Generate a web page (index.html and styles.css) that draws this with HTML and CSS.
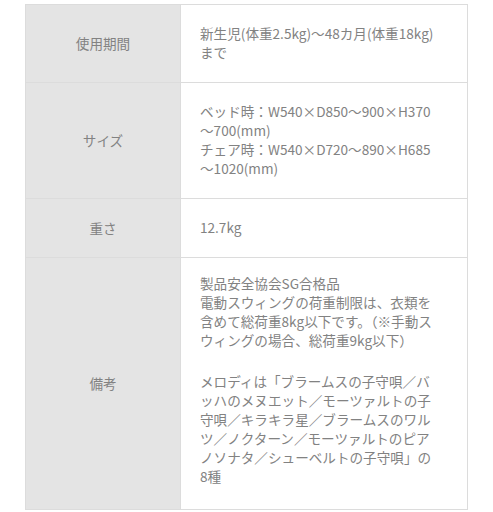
FILE: index.html
```html
<!DOCTYPE html>
<html lang="ja">
<head>
<meta charset="utf-8">
<link rel="stylesheet" href="styles.css">
</head>
<body>
<div class="wrap">
<table class="spec">
<tr>
<th>使用期間</th>
<td>新生児(体重2.5kg)〜48カ月(体重18kg)<br>まで</td>
</tr>
<tr>
<th>サイズ</th>
<td>ベッド時：W540×D850〜900×H370<br>〜700(mm)<br>チェア時：W540×D720〜890×H685<br>〜1020(mm)</td>
</tr>
<tr>
<th>重さ</th>
<td>12.7kg</td>
</tr>
<tr>
<th>備考</th>
<td class="note">製品安全協会SG合格品<br>電動スウィングの荷重制限は、衣類を<br>含めて総荷重8kg以下です。（※手動ス<br>ウィングの場合、総荷重9kg以下）<span class="gap"></span>メロディは「ブラームスの子守唄／バ<br>ッハのメヌエット／モーツァルトの子<br>守唄／キラキラ星／ブラームスのワル<br>ツ／ノクターン／モーツァルトのピア<br>ノソナタ／シューベルトの子守唄」の<br>8種</td>
</tr>
</table>
</div>
</body>
</html>
```
FILE: styles.css
```css
html, body {
  margin: 0;
  padding: 0;
  background: #ffffff;
}
.wrap {
  padding: 4px 0 0 25px;
}
.spec {
  border-collapse: collapse;
  width: 443px;
  font-family: "Noto Sans CJK JP", "Noto Sans", sans-serif;
  font-size: 13.6px;
  line-height: 19px;
  color: #828282;
  white-space: nowrap;
}
.spec th, .spec td {
  border: 1.5px solid #dcdcdc;
  vertical-align: middle;
}
.spec th {
  width: 154px;
  background: #e4e4e4;
  font-weight: normal;
  text-align: center;
  padding: 0;
}
.spec td {
  background: #ffffff;
  text-align: left;
  padding: 19px 18px 20px 19px;
}
.spec td.note {
  padding: 16px 18px 23px 19px;
}
.gap {
  display: block;
  height: 22px;
}
```
